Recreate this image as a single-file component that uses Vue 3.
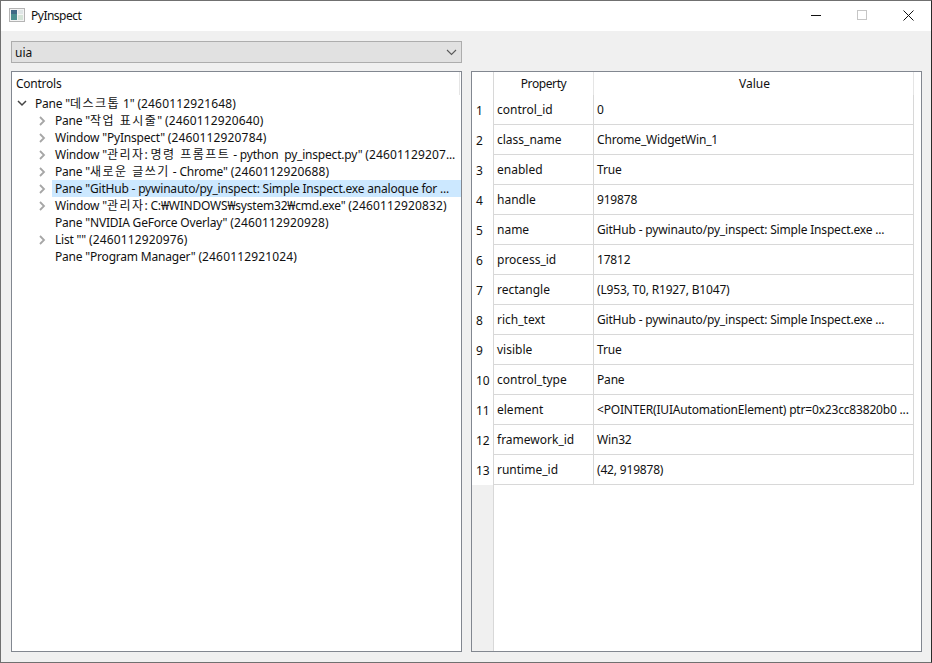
<script setup>
const tree = [
  { text: 'Pane "작업 표시줄" (2460112920640)', arrow: true },
  { text: 'Window "PyInspect" (2460112920784)', arrow: true },
  { text: 'Window "관리자: 명령 프롬프트 - python  py_inspect.py" (24601129207...', arrow: true },
  { text: 'Pane "새로운 글쓰기 - Chrome" (2460112920688)', arrow: true },
  { text: 'Pane "GitHub - pywinauto/py_inspect: Simple Inspect.exe analoque for ...', arrow: true, selected: true },
  { text: 'Window "관리자: C:₩WINDOWS₩system32₩cmd.exe" (2460112920832)', arrow: true },
  { text: 'Pane "NVIDIA GeForce Overlay" (2460112920928)', arrow: false },
  { text: 'List "" (2460112920976)', arrow: true },
  { text: 'Pane "Program Manager" (2460112921024)', arrow: false },
]
const rows = [
  ['control_id', '0'],
  ['class_name', 'Chrome_WidgetWin_1'],
  ['enabled', 'True'],
  ['handle', '919878'],
  ['name', 'GitHub - pywinauto/py_inspect: Simple Inspect.exe ...'],
  ['process_id', '17812'],
  ['rectangle', '(L953, T0, R1927, B1047)'],
  ['rich_text', 'GitHub - pywinauto/py_inspect: Simple Inspect.exe ...'],
  ['visible', 'True'],
  ['control_type', 'Pane'],
  ['element', '<POINTER(IUIAutomationElement) ptr=0x23cc83820b0 ...'],
  ['framework_id', 'Win32'],
  ['runtime_id', '(42, 919878)'],
]
const runs = (text) =>
  text.split(/([\uAC00-\uD7A3]+(?: [\uAC00-\uD7A3]+)*|\(\d+)/).filter(Boolean).map((t) => ({
    t,
    cls: /[\uAC00-\uD7A3]/.test(t) ? 'ko' : /^\(\d/.test(t) ? 'num' : '',
  }))
</script>

<template>
  <div class="win">
    <header class="titlebar">
      <svg class="appicon" width="16" height="16" viewBox="0 0 16 16">
        <rect x="0.5" y="1.5" width="15" height="13" fill="#f4f4f4" stroke="#b4b4b4" />
        <rect x="2" y="3" width="6" height="10" fill="#4b8f8f" />
        <rect x="2" y="3" width="6" height="4" fill="#3f6a86" />
        <rect x="9" y="3" width="5" height="4" fill="#dfe6e6" />
        <rect x="9" y="8" width="5" height="5" fill="#d5e4d8" />
      </svg>
      <span class="title">PyInspect</span>
      <div class="controls">
        <span class="ctl"><svg width="11" height="11" viewBox="0 0 11 11"><path d="M0 5.5H10" stroke="#111" fill="none" /></svg></span>
        <span class="ctl"><svg width="11" height="11" viewBox="0 0 11 11"><rect x="0.5" y="0.5" width="9" height="9" stroke="#c6c6c6" fill="none" /></svg></span>
        <span class="ctl"><svg width="11" height="11" viewBox="0 0 11 11"><path d="M0.5 0.5L10.5 10.5M10.5 0.5L0.5 10.5" stroke="#111" fill="none" /></svg></span>
      </div>
    </header>

    <main class="body">
      <div class="toprow">
        <div class="combo">
          <span>uia</span>
          <svg width="11" height="7" viewBox="0 0 11 7"><path d="M1 1L5.5 5.5L10 1" stroke="#5a5a5a" stroke-width="1.1" fill="none" /></svg>
        </div>
      </div>

      <div class="panes">
        <section class="pane">
          <div class="treehead">Controls</div>
          <div class="treerow root">
            <svg class="arrow" width="10" height="7" viewBox="0 0 10 7"><path d="M1 1L5 5L9 1" stroke="#444" stroke-width="1.5" fill="none" /></svg>
            <span class="label"><span v-for="(r, i) in runs('Pane &quot;데스크톱 1&quot; (2460112921648)')" :key="i" :class="r.cls">{{ r.t }}</span></span>
          </div>
          <div v-for="item in tree" :key="item.text" class="treerow child">
            <span class="arrowcell">
              <svg v-if="item.arrow" width="7" height="10" viewBox="0 0 7 10"><path d="M1 1L5 5L1 9" stroke="#a6a6a6" stroke-width="1.8" fill="none" /></svg>
            </span>
            <span class="label" :class="{ selected: item.selected }"><span v-for="(r, i) in runs(item.text)" :key="i" :class="r.cls">{{ r.t }}</span></span>
          </div>
        </section>

        <section class="pane table">
          <div class="vhead">
            <div class="corner"></div>
            <div v-for="(r, i) in rows" :key="r[0]" class="rownum">{{ i + 1 }}</div>
            <div class="vfill"></div>
          </div>
          <div class="grid">
            <div class="gridhead">
              <div class="cell-prop hc prophead">Property</div>
              <div class="cell-val hc valhead">Value</div>
            </div>
            <div v-for="r in rows" :key="r[0]" class="gridrow">
              <div class="cell-prop">{{ r[0] }}</div>
              <div class="cell-val value">{{ r[1] }}</div>
            </div>
          </div>
        </section>
      </div>
    </main>
  </div>
</template>

<style scoped>
.win {
  width: 932px;
  height: 663px;
  box-sizing: border-box;
  border: 1px solid #707070;
  border-right-color: #2a2a2a;
  background: #f0f0f0;
  display: flex;
  flex-direction: column;
  font: 12px/17px "Noto Sans", "Noto Sans CJK KR", sans-serif;
  color: #111;
  overflow: hidden;
}
.titlebar {
  height: 30px;
  box-sizing: border-box;
  padding: 0 0 2px 8px;
  background: #fff;
  display: flex;
  align-items: center;
  flex: none;
}
.appicon { flex: none; }
.title { margin-left: 6px; letter-spacing: -0.5px; }
.controls { margin-left: auto; display: flex; }
.ctl {
  width: 46px;
  height: 28px;
  display: flex;
  align-items: center;
  justify-content: center;
}
.body {
  flex: 1;
  min-height: 0;
  padding: 10px 8px 10px 10px;
  display: flex;
  flex-direction: column;
  gap: 8px;
}
.toprow { display: flex; }
.combo {
  width: 451px;
  height: 22px;
  box-sizing: border-box;
  background: #e1e1e1;
  border: 1px solid #adadad;
  display: flex;
  align-items: center;
  justify-content: space-between;
  padding: 0 4px 0 3px;
}
.panes {
  flex: 1;
  min-height: 0;
  display: flex;
  gap: 9px;
}
.pane {
  width: 451px;
  box-sizing: border-box;
  background: #fff;
  border: 1px solid #828790;
}
.treehead {
  height: 23px;
  box-sizing: border-box;
  padding: 3px 0 0 4px;
  border-right: 1px solid #e5e5e5;
  margin-right: 1px;
  letter-spacing: -0.25px;
}
.treerow {
  height: 17px;
  display: flex;
  align-items: center;
  white-space: pre;
}
.root { padding-left: 5px; }
.root .arrow { flex: none; margin-right: 5px; }
.child { padding-left: 27px; }
.arrowcell {
  width: 13px;
  flex: none;
  display: flex;
  align-items: center;
}
.label {
  flex: 1;
  min-width: 0;
  overflow: hidden;
  height: 17px;
  padding-left: 3px;
  letter-spacing: -0.2px;
}
.ko { letter-spacing: 1.5px; }
.num { letter-spacing: 0.14px; }
.selected { background: #cce8ff; }
.table { display: flex; }
.vhead {
  width: 21px;
  flex: none;
  display: flex;
  flex-direction: column;
  border-right: 1px solid #d8d8d8;
}
.corner { height: 23px; flex: none; }
.rownum {
  height: 30px;
  flex: none;
  padding-left: 4px;
  display: flex;
  align-items: center;
}
.vfill { flex: 1; background: #f0f0f0; }
.grid { width: 420px; flex: none; }
.gridhead, .gridrow { display: flex; }
.gridhead { height: 23px; }
.gridrow { height: 30px; box-sizing: border-box; border-bottom: 1px solid #d8d8d8; }
.cell-prop, .cell-val {
  box-sizing: border-box;
  display: flex;
  align-items: center;
  padding-left: 3px;
  border-right: 1px solid #d8d8d8;
  white-space: pre;
}
.cell-prop { width: 100px; flex: none; }
.cell-val { width: 320px; flex: none; }
.value { letter-spacing: -0.18px; }
.hc { justify-content: center; padding-left: 0; border-right-color: #e5e5e5; }
.valhead { padding-left: 2px; }
.prophead { letter-spacing: -0.4px; }
</style>

<style>
html, body { margin: 0; padding: 0; background: #f0f0f0; }
</style>
